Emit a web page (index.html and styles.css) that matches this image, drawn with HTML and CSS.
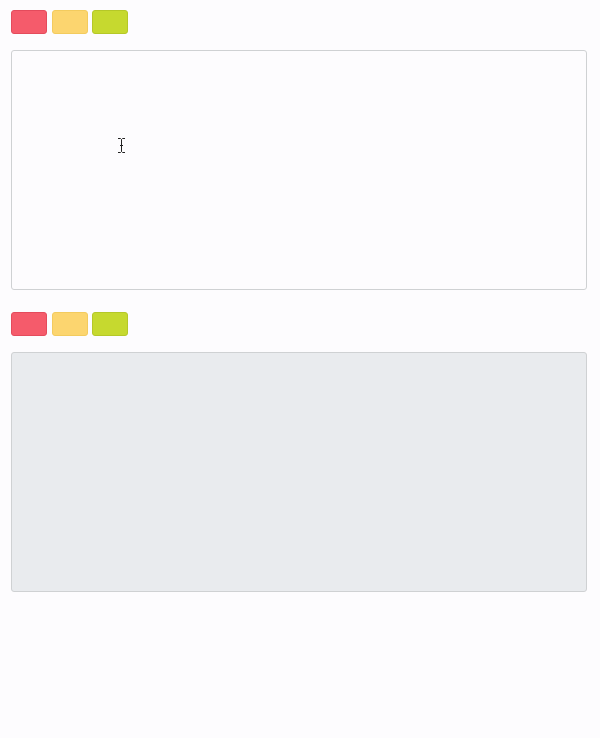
FILE: index.html
```html
<!DOCTYPE html>
<html>
<head>
<meta charset="utf-8">
<link rel="stylesheet" href="styles.css">
</head>
<body>
<div class="page">
  <section class="editor">
    <div class="swatches">
      <button class="swatch red" aria-label="red"></button>
      <button class="swatch yellow" aria-label="yellow"></button>
      <button class="swatch green" aria-label="green"></button>
    </div>
    <div class="pad">
      <svg class="cursor" width="9" height="17" viewBox="0 0 9 17"><path d="M1 1.5h2.5L4.5 2.5L5.5 1.5H8M4.5 2.5V14.5M1 15.5h2.5L4.5 14.5L5.5 15.5H8M3 8.5h3" fill="none" stroke="#222" stroke-width="1"/></svg>
    </div>
  </section>
  <section class="editor">
    <div class="swatches">
      <button class="swatch red" aria-label="red"></button>
      <button class="swatch yellow" aria-label="yellow"></button>
      <button class="swatch green" aria-label="green"></button>
    </div>
    <div class="pad disabled"></div>
  </section>
</div>
</body>
</html>
```
FILE: styles.css
```css
html, body {
  margin: 0;
  padding: 0;
  background: #fdfcfe;
  font-family: "Liberation Sans", sans-serif;
}
.page {
  padding: 10px 13px 0 11px;
  display: flex;
  flex-direction: column;
  gap: 22px;
}
.editor {
  display: flex;
  flex-direction: column;
  gap: 16px;
}
.swatches {
  display: flex;
  gap: 4.5px;
}
.swatch {
  width: 36px;
  height: 24px;
  border-radius: 3px;
  border: 1px solid;
  padding: 0;
  margin: 0;
  box-sizing: border-box;
}
.red { background: #f55b6b; border-color: #e44b5c; }
.yellow { background: #fcd56f; border-color: #f3cb5e; }
.green { background: #c6d92f; border-color: #b5c828; }
.pad {
  position: relative;
  height: 240px;
  border: 1px solid #cfd1d3;
  border-radius: 3px;
  background: #fdfcfe;
  box-sizing: border-box;
}
.pad.disabled {
  background: #e9ebee;
}
.cursor {
  position: absolute;
  left: 105px;
  top: 86px;
}
```
